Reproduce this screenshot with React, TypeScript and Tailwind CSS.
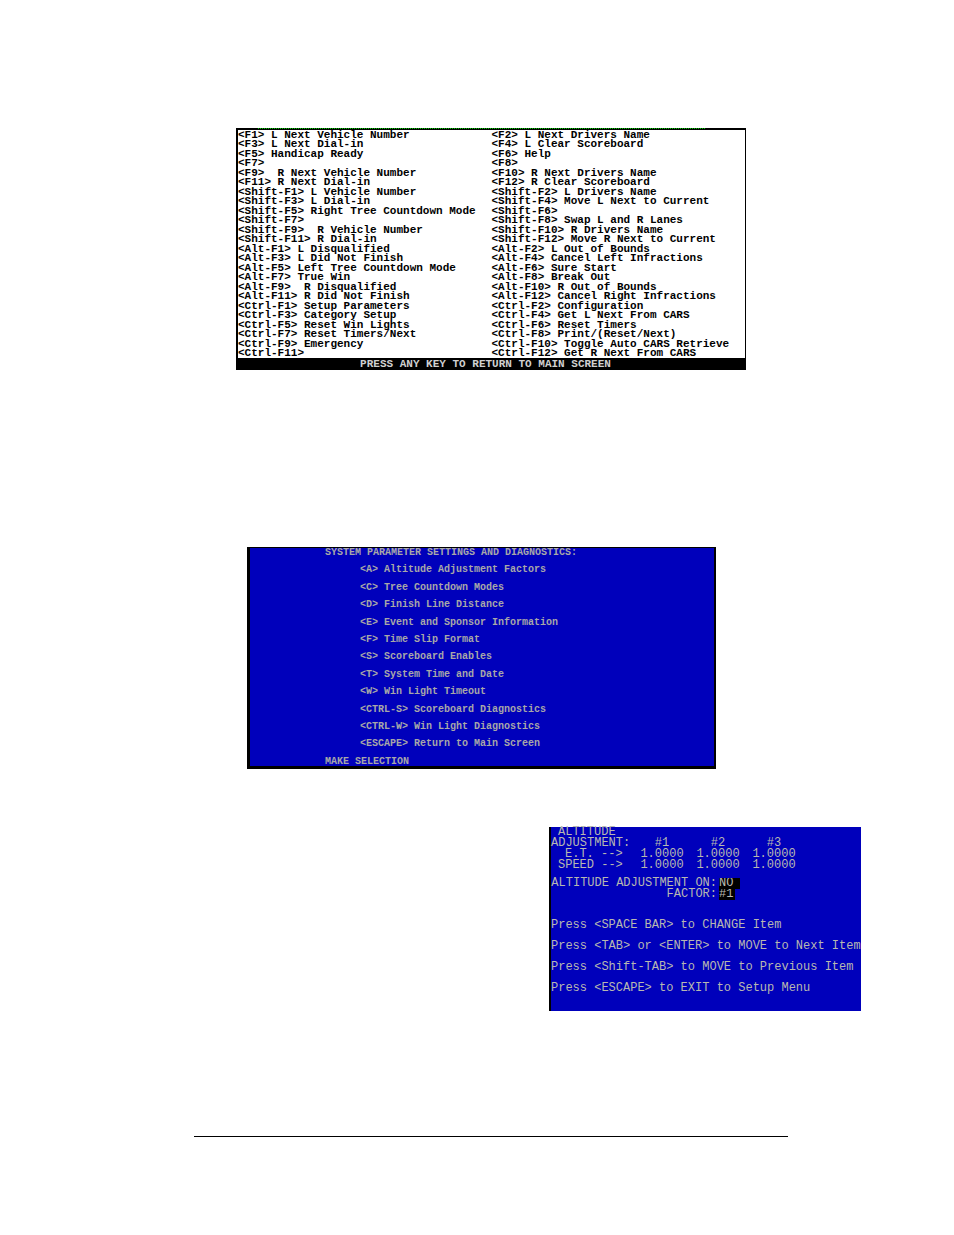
import { useState } from "react";

const leftKeys = [
  "<F1> L Next Vehicle Number",
  "<F3> L Next Dial-in",
  "<F5> Handicap Ready",
  "<F7>",
  "<F9>  R Next Vehicle Number",
  "<F11> R Next Dial-in",
  "<Shift-F1> L Vehicle Number",
  "<Shift-F3> L Dial-in",
  "<Shift-F5> Right Tree Countdown Mode",
  "<Shift-F7>",
  "<Shift-F9>  R Vehicle Number",
  "<Shift-F11> R Dial-in",
  "<Alt-F1> L Disqualified",
  "<Alt-F3> L Did Not Finish",
  "<Alt-F5> Left Tree Countdown Mode",
  "<Alt-F7> True Win",
  "<Alt-F9>  R Disqualified",
  "<Alt-F11> R Did Not Finish",
  "<Ctrl-F1> Setup Parameters",
  "<Ctrl-F3> Category Setup",
  "<Ctrl-F5> Reset Win Lights",
  "<Ctrl-F7> Reset Timers/Next",
  "<Ctrl-F9> Emergency",
  "<Ctrl-F11>",
];

const rightKeys = [
  "<F2> L Next Drivers Name",
  "<F4> L Clear Scoreboard",
  "<F6> Help",
  "<F8>",
  "<F10> R Next Drivers Name",
  "<F12> R Clear Scoreboard",
  "<Shift-F2> L Drivers Name",
  "<Shift-F4> Move L Next to Current",
  "<Shift-F6>",
  "<Shift-F8> Swap L and R Lanes",
  "<Shift-F10> R Drivers Name",
  "<Shift-F12> Move R Next to Current",
  "<Alt-F2> L Out of Bounds",
  "<Alt-F4> Cancel Left Infractions",
  "<Alt-F6> Sure Start",
  "<Alt-F8> Break Out",
  "<Alt-F10> R Out of Bounds",
  "<Alt-F12> Cancel Right Infractions",
  "<Ctrl-F2> Configuration",
  "<Ctrl-F4> Get L Next From CARS",
  "<Ctrl-F6> Reset Timers",
  "<Ctrl-F8> Print/(Reset/Next)",
  "<Ctrl-F10> Toggle Auto CARS Retrieve",
  "<Ctrl-F12> Get R Next From CARS",
];

const menuItems = [
  "<A> Altitude Adjustment Factors",
  "<C> Tree Countdown Modes",
  "<D> Finish Line Distance",
  "<E> Event and Sponsor Information",
  "<F> Time Slip Format",
  "<S> Scoreboard Enables",
  "<T> System Time and Date",
  "<W> Win Light Timeout",
  "<CTRL-S> Scoreboard Diagnostics",
  "<CTRL-W> Win Light Diagnostics",
  "<ESCAPE> Return to Main Screen",
];

const hints = [
  "Press <SPACE BAR> to CHANGE Item",
  "Press <TAB> or <ENTER> to MOVE to Next Item",
  "Press <Shift-TAB> to MOVE to Previous Item",
  "Press <ESCAPE> to EXIT to Setup Menu",
];

function KeyColumn({ keys }: { keys: string[] }) {
  return (
    <ul className="grid h-[228px] auto-rows-fr items-center">
      {keys.map((key) => (
        <li key={key} className="h-2 whitespace-pre leading-2">
          {key}
        </li>
      ))}
    </ul>
  );
}

function HelpScreen() {
  return (
    <section className="mx-[42px] border-l-2 border-r border-black text-[11px] font-bold text-black">
      <div className="h-0.5 bg-black">
        <div className="ml-5 mr-10 border-t border-dotted border-[#00d000]" />
      </div>
      <div className="grid grid-cols-2">
        <KeyColumn keys={leftKeys} />
        <KeyColumn keys={rightKeys} />
      </div>
      <p className="h-3 bg-black pr-3 text-center leading-3 text-[#d0d0d0]">
        PRESS ANY KEY TO RETURN TO MAIN SCREEN
      </p>
    </section>
  );
}

function SetupMenu() {
  return (
    <section className="ml-[53px] mr-[72px] mt-[177px] flex h-[222px] flex-col items-start justify-between border-t border-r-2 border-b-3 border-l-3 border-black bg-[#0000bb] pl-[75px] text-[10px] leading-[9px] font-bold text-[#a8a8a8]">
      <h2>SYSTEM PARAMETER SETTINGS AND DIAGNOSTICS:</h2>
      {menuItems.map((item) => (
        <button key={item} type="button" className="ml-[35px] block h-[9px] whitespace-pre">
          {item}
        </button>
      ))}
      <p>MAKE SELECTION</p>
    </section>
  );
}

function AltitudeScreen() {
  const [enabled, setEnabled] = useState("NO");
  const [factor, setFactor] = useState("#1");

  return (
    <section className="-mr-[73px] mt-[58px] w-[312px] self-end border-l-2 border-black bg-[#0000bb] pb-3 text-[12px] leading-[11px] text-[#b8b8b0]">
      <table className="table-fixed border-collapse">
        <caption className="pl-[7px] text-left">ALTITUDE</caption>
        <thead>
          <tr>
            <th className="w-[83px] p-0 text-left font-normal">ADJUSTMENT:</th>
            <th className="w-14 p-0 font-normal">#1</th>
            <th className="w-14 p-0 font-normal">#2</th>
            <th className="w-14 p-0 font-normal">#3</th>
          </tr>
        </thead>
        <tbody>
          <tr className="text-center">
            <th className="p-0 pl-[14px] text-left font-normal">E.T. --&gt;</th>
            <td className="p-0">1.0000</td>
            <td className="p-0">1.0000</td>
            <td className="p-0">1.0000</td>
          </tr>
          <tr className="text-center">
            <th className="p-0 pl-[7px] text-left font-normal">SPEED --&gt;</th>
            <td className="p-0">1.0000</td>
            <td className="p-0">1.0000</td>
            <td className="p-0">1.0000</td>
          </tr>
        </tbody>
      </table>

      <form className="mt-[7px] grid grid-cols-[166px_1fr] gap-x-0.5">
        <label htmlFor="adjustment" className="justify-self-end whitespace-nowrap">
          ALTITUDE ADJUSTMENT ON:
        </label>
        <select
          id="adjustment"
          value={enabled}
          onChange={(e) => setEnabled(e.target.value)}
          className="h-[11px] w-[21px] appearance-none bg-black"
        >
          <option>NO</option>
          <option>YES</option>
        </select>
        <label htmlFor="factor" className="justify-self-end">
          FACTOR:
        </label>
        <select
          id="factor"
          value={factor}
          onChange={(e) => setFactor(e.target.value)}
          className="h-[11px] w-4 appearance-none bg-black"
        >
          <option>#1</option>
          <option>#2</option>
          <option>#3</option>
        </select>
      </form>

      <div className="mt-[15px] leading-[21px]">
        {hints.map((hint) => (
          <p key={hint} className="whitespace-nowrap">
            {hint}
          </p>
        ))}
      </div>
    </section>
  );
}

export default function App() {
  return (
    <main className="flex min-h-screen flex-col bg-white pt-32 pr-[166px] pb-[98px] pl-[194px] font-['Liberation_Mono',monospace]">
      <HelpScreen />
      <SetupMenu />
      <AltitudeScreen />
      <hr className="mt-[125px] border-black" />
    </main>
  );
}
